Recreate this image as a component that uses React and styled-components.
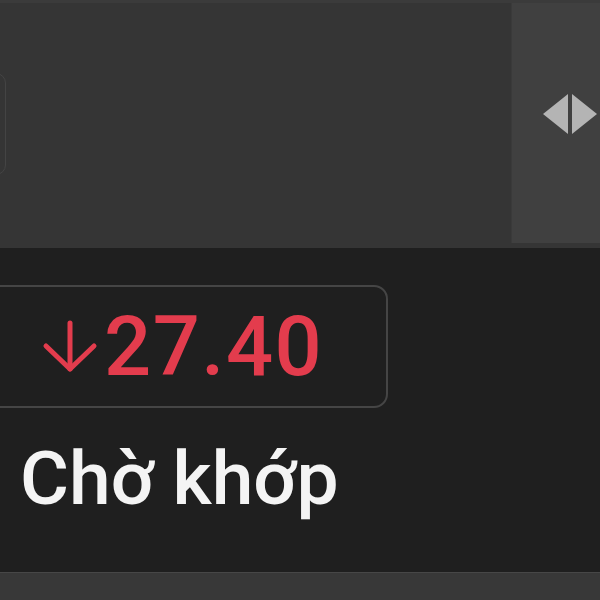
import React from "react";
import styled, { createGlobalStyle } from "styled-components";

const GlobalStyle = createGlobalStyle`
  body {
    margin: 0;
    background: #1f1f1f;
    font-family: Roboto, "Noto Sans", sans-serif;
  }
`;

const Screen = styled.div`
  width: 600px;
  height: 600px;
  display: flex;
  flex-direction: column;
  overflow: hidden;
  background: #1f1f1f;
`;

const TopArea = styled.div`
  height: 248px;
  display: flex;
  background: #353535;
  border-top: 3px solid #3b3b3b;
  box-sizing: border-box;
`;

const MainPane = styled.div`
  flex: 1;
  padding-top: 70px;
`;

const CutCard = styled.div`
  width: 100px;
  height: 100px;
  margin-left: -96px;
  border: 1px solid #444;
  border-radius: 10px;
`;

const SidePane = styled.div`
  width: 89px;
  height: 240px;
  background: #404040;
  border-left: 1px solid #3a3a3a;
  display: flex;
  justify-content: flex-end;
  padding: 90px 3px 0 0;
  box-sizing: border-box;
`;

const Content = styled.div`
  flex: 1;
  padding-top: 37px;
  display: flex;
  flex-direction: column;
`;

const PriceBox = styled.div`
  width: 408px;
  height: 123px;
  margin-left: -20px;
  box-sizing: border-box;
  border: 2px solid #454545;
  border-radius: 14px;
  display: flex;
  align-items: center;
  gap: 6px;
  padding-left: 60px;
`;

const Price = styled.span`
  color: ${(p) => p.color};
  font-size: 83px;
  font-weight: 500;
  letter-spacing: 1.5px;
  line-height: 1;
`;

const Status = styled.div`
  color: #f4f4f4;
  font-size: 75px;
  font-weight: 500;
  line-height: 1;
  margin: 33px 0 0 20px;
`;

const BottomBar = styled.div`
  height: 27px;
  background: #383838;
  border-top: 1px solid #474747;
`;

const DownArrow = ({ color }) => (
  <svg width="56" height="56" viewBox="0 0 56 56" fill="none" stroke={color} strokeWidth="5" strokeLinecap="round" strokeLinejoin="round">
    <path d="M28 4 V50" />
    <path d="M4 27 L28 50 L52 27" />
  </svg>
);

const SwapIcon = () => (
  <svg width="54" height="42" viewBox="0 0 54 42" fill="#b4b4b4">
    <path d="M0 21 L25 1 V41 Z" />
    <path d="M29 1 L54 21 L29 41 Z" />
  </svg>
);

export default function App() {
  const red = "#e33c4d";
  return (
    <>
      <GlobalStyle />
      <Screen>
        <TopArea>
          <MainPane>
            <CutCard />
          </MainPane>
          <SidePane>
            <SwapIcon />
          </SidePane>
        </TopArea>
        <Content>
          <PriceBox>
            <DownArrow color={red} />
            <Price color={red}>27.40</Price>
          </PriceBox>
          <Status>Chờ khớp</Status>
        </Content>
        <BottomBar />
      </Screen>
    </>
  );
}
